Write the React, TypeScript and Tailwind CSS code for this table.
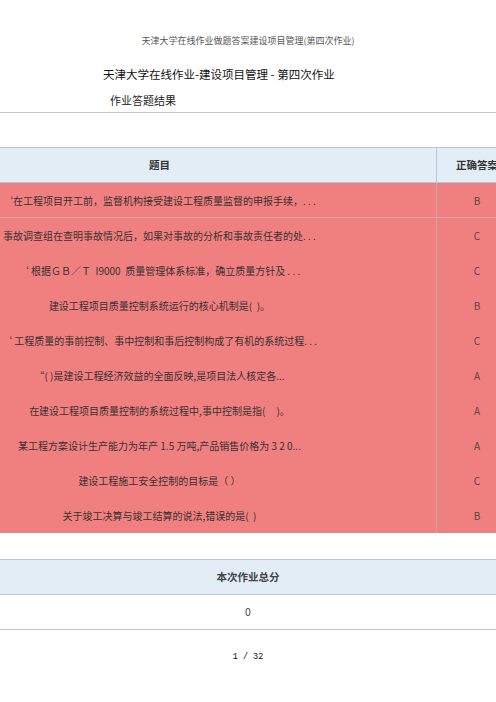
import React from 'react';

const rows: { q: string; a: string }[] = [
  { q: '‘在工程项目开工前，监督机构接受建设工程质量监督的申报手续，. . .', a: 'B' },
  { q: '事故调查组在查明事故情况后，如果对事故的分析和事故责任者的处. . .', a: 'C' },
  { q: '‘ 根据ＧＢ／Ｔ  I9000  质量管理体系标准，确立质量方针及 . . .', a: 'C' },
  { q: '建设工程项目质量控制系统运行的核心机制是(  )。', a: 'B' },
  { q: '‘ 工程质量的事前控制、事中控制和事后控制构成了有机的系统过程. . .', a: 'C' },
  { q: '“( )是建设工程经济效益的全面反映,是项目法人核定各...', a: 'A' },
  { q: '在建设工程项目质量控制的系统过程中,事中控制是指(     )。', a: 'A' },
  { q: '某工程方案设计生产能力为年产 1.5 万吨,产品销售价格为 3 2 0...', a: 'A' },
  { q: '建设工程施工安全控制的目标是（ ）', a: 'C' },
  { q: '关于竣工决算与竣工结算的说法,错误的是(  )', a: 'B' },
];

const font = { fontFamily: '"Noto Sans CJK SC", "Noto Sans", sans-serif' };

const App: React.FC = () => {
  return (
    <div className="w-[496px] h-[702px] overflow-hidden bg-white" style={font}>
      {/* page header */}
      <div className="pt-[34px] text-center text-[9px] leading-[14px] text-[#555]">
        天津大学在线作业做题答案建设项目管理(第四次作业)
      </div>
      <div className="mt-[18px] pl-[103px] text-[11.5px] leading-[16px] text-[#111]">
        天津大学在线作业-建设项目管理 - 第四次作业
      </div>
      <div className="mt-[10px] pl-[110px] text-[11px] leading-[16px] text-[#222]">作业答题结果</div>
      <div className="mt-[4px] h-px bg-[#c5c6e0]" />

      {/* results table */}
      <div className="mt-[34px] -ml-[117px] w-[634px] border-t border-[#b9c5dc]">
        <div className="flex h-[35px] bg-[#e2edf6] border-b border-[#b9c5dc] text-[10.5px] font-bold text-[#333]">
          <div className="w-[554px] flex items-center justify-center border-r border-[#b9c5dc]">题目</div>
          <div className="flex-1 flex items-center justify-center">正确答案</div>
        </div>
        {rows.map((r, i) => (
          <div
            key={i}
            className={`flex h-[35px] bg-[#f08080] text-[10px] text-[#3b3030] ${i === 0 ? 'border-b border-[#d8a6b8]' : ''}`}
          >
            <div className="w-[554px] flex items-center justify-center border-r border-[#c9a4b4] whitespace-pre">{r.q}</div>
            <div className="flex-1 flex items-center justify-center text-[#5a4444]">{r.a}</div>
          </div>
        ))}
      </div>

      {/* total score */}
      <div className="mt-[26px] border-t border-[#b9c5dc]">
        <div className="h-[35px] flex items-center justify-center bg-[#e2edf6] border-b border-[#b9c5dc] text-[10.5px] font-bold text-[#444]">
          本次作业总分
        </div>
        <div className="h-[35px] flex items-center justify-center border-b border-[#b9c5dc] text-[10.5px] text-[#444]">0</div>
      </div>

      <div className="mt-[21px] text-center text-[8.5px] text-[#111]" style={{ fontFamily: '"Liberation Mono", monospace' }}>
        1 / 32
      </div>
    </div>
  );
};

export default App;
